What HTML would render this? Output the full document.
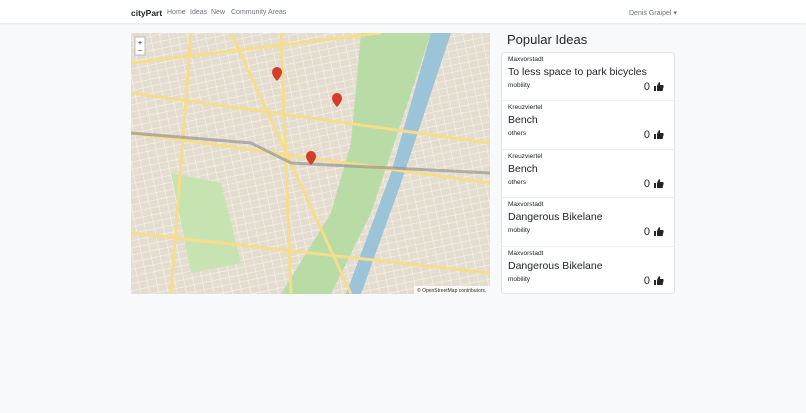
<!DOCTYPE html>
<html><head><style>
*{margin:0;padding:0;box-sizing:border-box}
body{width:806px;height:413px;background:#f8f9fa;font-family:"Liberation Sans",sans-serif;color:#212529;position:relative;overflow:hidden}
.nav{position:absolute;left:0;top:0;width:806px;height:23px;background:#fff;box-shadow:0 1px 2px rgba(0,0,0,.08)}
.nav span{position:absolute;top:9px;font-size:7px;color:#6c757d;white-space:nowrap}
.brand{left:131px;font-size:8.5px!important;color:#212529!important;top:8px!important;font-weight:bold}
.map{position:absolute;left:131px;top:33px;width:359px;height:261px;background:#ece6dc;overflow:hidden}
h2{position:absolute;left:507px;top:32px;font-size:13px;font-weight:normal}
.card{position:absolute;left:501px;top:52px;width:174px;height:242px;background:#fff;border:1px solid #e5e5e5;border-radius:3px}
.it{height:48.4px;border-bottom:1px solid #eee;position:relative;padding:3px 6px}
.it:last-child{border-bottom:none}
.a{font-size:6.5px;display:block}
.t{font-size:10.5px;display:block;margin-top:3px}
.c{font-size:6.5px;display:block;margin-top:4px}
.v{position:absolute;right:10px;top:28px;font-size:11px}
.v svg{vertical-align:-1px;margin-left:4px}
</style></head><body>
<div class="nav"><span class="brand">cityPart</span><span style="left:167px">Home</span><span style="left:190px">Ideas</span><span style="left:211px">New</span><span style="left:231px">Community</span><span style="left:268px">Areas</span><span style="left:629px">Denis Graipel ▾</span></div>
<div class="map">
<svg width="359" height="261">
<defs><pattern id="p" width="9" height="7" patternUnits="userSpaceOnUse" patternTransform="rotate(-12)"><rect width="9" height="7" fill="#e4dccf"/><path d="M0 0H9M0 0V7" stroke="#f7f3ec" stroke-width="1.2"/></pattern></defs>
<rect width="359" height="261" fill="url(#p)"/>
<path d="M230 0 L300 0 L280 60 L260 120 L240 180 L200 261 L150 261 L200 180 L220 110 Z" fill="#b9dba5"/>
<path d="M40 140 L90 150 L110 230 L60 240 Z" fill="#c7e3b2"/>
<path d="M300 0 L320 0 L270 150 L230 261 L215 261 L260 140 Z" fill="#9cc4d8"/>
<path d="M0 60 L359 110 M0 100 L359 150 M60 0 L40 261 M150 0 L160 261 M0 200 L359 240 M100 0 L220 261 M0 30 L250 0" stroke="#f6dd8b" stroke-width="3" fill="none"/>
<path d="M0 100 L120 110 L160 130 L359 140" stroke="#8a8a8a" stroke-width="3" fill="none" opacity=".6"/>
<rect x="4" y="4" width="10" height="18" fill="#fff" stroke="#bbb"/>
<text x="9" y="12" font-size="7" text-anchor="middle">+</text><text x="9" y="20" font-size="7" text-anchor="middle">−</text>
<g fill="#d63e2a"><path d="M146 34a5 5 0 0 1 5 5c0 4-5 9-5 9s-5-5-5-9a5 5 0 0 1 5-5z"/><path d="M206 60a5 5 0 0 1 5 5c0 4-5 9-5 9s-5-5-5-9a5 5 0 0 1 5-5z"/><path d="M180 118a5 5 0 0 1 5 5c0 4-5 9-5 9s-5-5-5-9a5 5 0 0 1 5-5z"/></g>
<rect x="283" y="253" width="76" height="8" fill="#fff" opacity=".8"/>
<text x="286" y="259" font-size="5" fill="#333">© OpenStreetMap contributors.</text>
</svg></div>
<h2>Popular Ideas</h2>
<div class="card">
<div class="it"><span class="a">Maxvorstadt</span><span class="t">To less space to park bicycles</span><span class="c">mobility</span><span class="v">0<svg width="10" height="9" viewBox="0 0 10 9"><rect x="0" y="4" width="2" height="5" fill="#212529"/><path d="M3 4 L5 0 Q6.5 0 6 3 H9 Q10 3.5 9.5 5 L8.5 9 H3 Z" fill="#212529"/></svg></span></div>
<div class="it"><span class="a">Kreuzviertel</span><span class="t">Bench</span><span class="c">others</span><span class="v">0<svg width="10" height="9" viewBox="0 0 10 9"><rect x="0" y="4" width="2" height="5" fill="#212529"/><path d="M3 4 L5 0 Q6.5 0 6 3 H9 Q10 3.5 9.5 5 L8.5 9 H3 Z" fill="#212529"/></svg></span></div>
<div class="it"><span class="a">Kreuzviertel</span><span class="t">Bench</span><span class="c">others</span><span class="v">0<svg width="10" height="9" viewBox="0 0 10 9"><rect x="0" y="4" width="2" height="5" fill="#212529"/><path d="M3 4 L5 0 Q6.5 0 6 3 H9 Q10 3.5 9.5 5 L8.5 9 H3 Z" fill="#212529"/></svg></span></div>
<div class="it"><span class="a">Maxvorstadt</span><span class="t">Dangerous Bikelane</span><span class="c">mobility</span><span class="v">0<svg width="10" height="9" viewBox="0 0 10 9"><rect x="0" y="4" width="2" height="5" fill="#212529"/><path d="M3 4 L5 0 Q6.5 0 6 3 H9 Q10 3.5 9.5 5 L8.5 9 H3 Z" fill="#212529"/></svg></span></div>
<div class="it"><span class="a">Maxvorstadt</span><span class="t">Dangerous Bikelane</span><span class="c">mobility</span><span class="v">0<svg width="10" height="9" viewBox="0 0 10 9"><rect x="0" y="4" width="2" height="5" fill="#212529"/><path d="M3 4 L5 0 Q6.5 0 6 3 H9 Q10 3.5 9.5 5 L8.5 9 H3 Z" fill="#212529"/></svg></span></div>
</div>
</body></html>
